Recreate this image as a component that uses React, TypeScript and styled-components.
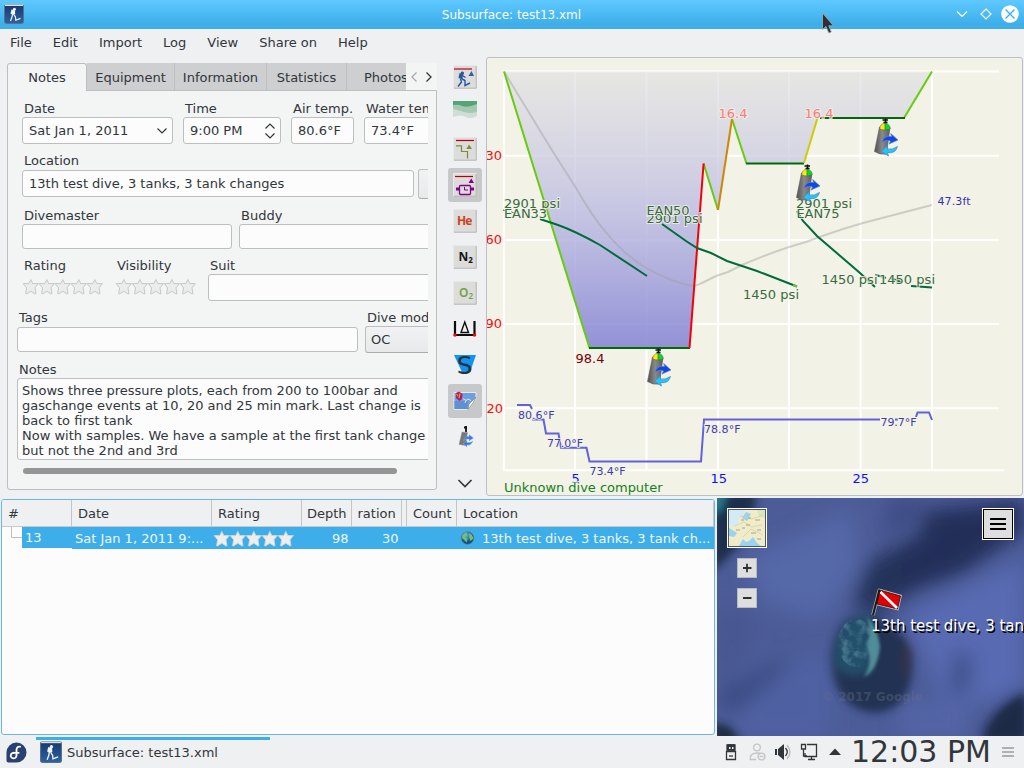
import React from "react";
import styled, { createGlobalStyle } from "styled-components";

const Global = createGlobalStyle`
  * { box-sizing: border-box; }
  html, body { margin: 0; padding: 0; overflow: hidden; }
  body { font-family: "DejaVu Sans", sans-serif; font-size: 13px; line-height: 15px; color: #31363b; }
  svg { display: block; flex: none; }
`;

const Window = styled.div`
  width: 1024px; height: 768px; display: flex; flex-direction: column;
  background: #eff0f1; overflow: hidden; white-space: nowrap;
`;
const TitleBar = styled.header`
  height: 29px; flex: none; display: grid; grid-template-columns: 80px 1fr 80px; align-items: center;
  padding: 0 5px 1px 4px; color: #fcfcfc; background: linear-gradient(#5fc9ff, #3daee9 85%);
`;
const Title = styled.div` text-align: center; font-size: 12px; padding-top: 2px; `;
const TitleButtons = styled.div` display: flex; justify-content: flex-end; `;
const MenuBar = styled.nav`
  height: 28px; flex: none; display: flex; align-items: center; padding: 0 0 1px 10px; gap: 21px;
`;
const Main = styled.main` height: 441px; flex: none; display: flex; `;

const InfoPanel = styled.section` width: 444px; padding: 6px 7px 8px 7px; display: flex; flex-direction: column; `;
const TabBar = styled.div` height: 28px; display: flex; position: relative; z-index: 1; `;
const Tab = styled.div<{ $w: number; $active?: boolean }>`
  width: ${p => p.$w}px; height: ${p => (p.$active ? 28 : 27)}px; line-height: ${p => (p.$active ? 27 : 29)}px; text-align: center; overflow: hidden; flex: none;
  background: ${p => (p.$active ? "#f3f4f4" : "#cecfd0")};
  border: solid #bcbebf; border-width: ${p => (p.$active ? "1px 1px 0 1px" : "0 1px 0 0")};
  border-radius: ${p => (p.$active ? "3px 3px 0 0" : "0")};
`;
const LastTab = styled(Tab)` text-align: left; padding-left: 17px; border-right: 0; `;
const TabScroll = styled.div` width: 31px; height: 27px; display: flex; align-items: center; background: #f3f4f4; `;
const Pane = styled.div`
  height: 400px; margin-top: -1px; border: 1px solid #bcbebf; border-radius: 0 0 3px 3px; background: #f3f4f4;
  padding: 10px 8px 0 0; 
`;
const PaneClip = styled.div` height: 386px; overflow: hidden; width: 420px; `;
const FormRow = styled.div<{ $h: number; $left?: number; $gap: number }>`
  display: flex; height: ${p => p.$h}px; padding-left: ${p => p.$left ?? 14}px; gap: ${p => p.$gap}px;
`;
const Field = styled.div<{ $w: number }>` width: ${p => p.$w}px; flex: none; `;
const Label = styled.div<{ $gap?: number }>` padding-left: 2px; margin-bottom: ${p => p.$gap ?? 1}px; height: 15px; `;
const Input = styled.div<{ $h?: number }>`
  height: ${p => p.$h ?? 27}px; border: 1px solid #bcbebf; border-radius: 3px; background: #fcfcfc;
  padding: 0 4px 0 6px; display: flex; align-items: center; justify-content: space-between;
`;
const Button = styled(Input)` background: linear-gradient(#f1f2f3, #e8e9ea); border-bottom-color: #a9abac; padding-left: 5px; `;
const PickerButton = styled(Button)` width: 30px; height: 30px; flex: none; margin-top: 16px; `;
const NotesBox = styled.div`
  width: 430px; height: 82px; border: 1px solid #bcbebf; border-radius: 3px; background: #fcfcfc; padding: 4px; white-space: pre; overflow: hidden;
`;
const ScrollThumb = styled.div` width: 374px; height: 6px; border-radius: 3px; margin: 7px 0 0 15px; background: #929697; `;

const ToolBar = styled.aside` width: 42px; display: flex; flex-direction: column; padding: 3px 4px; gap: 2px; `;
const Tool = styled.div<{ $on?: boolean }>`
  width: 34px; height: 34px; flex: none; display: flex; align-items: center; justify-content: center;
  border-radius: 3px; background: ${p => (p.$on ? "#c6c8ca" : "transparent")};
`;
const Profile = styled.section`
  width: 537px; height: 439px; border: 1px solid #bcc0c4; border-radius: 3px; background: #f3f2e6; overflow: hidden;
`;

const Bottom = styled.section` height: 238px; flex: none; display: flex; padding-left: 1px; `;
const DiveList = styled.div`
  width: 714px; height: 236px; margin-top: 1px; border: 1px solid #6db6de; border-radius: 3px; background: #fcfcfc; overflow: hidden;
`;
const HeaderRow = styled.div` display: flex; height: 27px; background: #eff0f1; border-bottom: 1px solid #c8cacc; `;
const HeadCell = styled.div<{ $w: number; $pad?: number }>`
  width: ${p => p.$w}px; flex: none; border-right: 1px solid #c3c5c7; line-height: 27px; padding-left: ${p => p.$pad ?? 6}px; overflow: hidden;
`;
const DiveRow = styled.div` display: flex; height: 22px; color: #eff7fc; `;
const Branch = styled.div` width: 20px; height: 22px; flex: none; `;
const Cell = styled.div<{ $w: number; $right?: boolean; $h?: number; $pad?: number }>`
  width: ${p => p.$w}px; height: ${p => p.$h ?? 22}px; flex: none; background: #3daee9; line-height: 23px;
  padding-left: ${p => (p.$right ? 0 : p.$pad ?? 3)}px; padding-right: ${p => (p.$right ? 3.5 : 0)}px;
  text-align: ${p => (p.$right ? "right" : "left")}; display: ${p => (p.$right ? "block" : "flex")}; align-items: center;
`;
const MapPane = styled.div` width: 307px; height: 238px; margin-left: 2px; overflow: hidden; `;

const TaskBar = styled.footer`
  height: 32px; flex: none; display: flex; align-items: center; background: #eff0f1; padding-left: 6px;
`;
const TaskItem = styled.div`
  width: 235px; height: 32px; margin-left: 9px; display: flex; align-items: center; gap: 5px; padding: 0 0 0 4px;
  background: linear-gradient(#3daee9, #3daee9) 0 1px / 234px 3px no-repeat;
`;
const Tray = styled.div` margin-left: auto; display: flex; align-items: center; height: 32px; `;
const Clock = styled.div` width: 150px; font-size: 30px; line-height: 32px; padding-left: 9px; `;
const Pointer = styled.svg` position: absolute; left: 821px; top: 12px; `;

const starPath = "M8 .6 L10 4.6 H15.6 L12.2 8.8 L13.2 14.8 H12 L8 12.2 L4 14.8 H2.800 L3.8 8.8 L.4 4.6 H6Z";
const Stars = ({ fill, stroke }: { fill: string; stroke: string }) => (
  <svg width="81" height="17" viewBox="0 0 81 17">
    {[0, 1, 2, 3, 4].map(i => (
      <path key={i} d={starPath} transform={`translate(${i * 16 + 0.8} 1)`} fill={fill} stroke={stroke} strokeWidth="1" />
    ))}
  </svg>
);

const AppIcon = ({ size }: { size: number }) => (
  <svg width={size} height={size} viewBox="0 0 20 20">
    <defs>
      <linearGradient id="appIcon" x2="0" y2="1"><stop stopColor="#17386e" /><stop offset="1" stopColor="#2d62a6" /></linearGradient>
    </defs>
    <rect x=".5" y=".5" width="19" height="19" rx="2" fill="url(#appIcon)" stroke="#5a7184" />
    <path d="M1 1.2H19" stroke="#d9dfdc" strokeWidth="1.6" />
    <circle cx="10.4" cy="5.2" r="1.500" fill="#f4f4ee" />
    <path d="M7.500 5.500L11 6.500L11.200 10L9 11L6.500 9.500Z" fill="#f4f4ee" />
    <path d="M8.500 10L8 13L6.500 17M9.800 10.500L11.400 12.800L11.800 16.200L16.500 14.400" fill="none" stroke="#f4f4ee" strokeWidth="1.200" />
  </svg>
);

const Tile = () => (
  <>
    <rect x=".5" y=".5" width="23" height="23" fill="#dcdcdb" />
    <path d="M.5 23.5V.5H23.5" fill="none" stroke="#e9e9e8" />
    <path d="M23.2 1V23.2H1" fill="none" stroke="#b5b5b4" />
  </>
);
const Ico = ({ children }: { children: React.ReactNode }) => (
  <svg width="24" height="24" viewBox="0 0 24 24">{children}</svg>
);

const Cylinder = ({ x, y }: { x: number; y: number }) => (
  <g transform={`translate(${x} ${y})`}>
    <path d="M8 1.500H13.500M11 0V6M9 4H13" stroke="#111" strokeWidth="1.700" />
    <path d="M5 8.500L15.500 9L12 35.500Q5 36.500 0 33Z" fill="url(#tankBody)" stroke="#5c5c5c" strokeWidth=".6" />
    <path d="M5.300 10.500A5.200 5.200 0 0 1 10.600 4.800V11.400Q7.500 11.500 5.300 10.500Z" fill="#f6f000" stroke="#555" strokeWidth=".5" />
    <path d="M10.600 4.800A5.200 5.200 0 0 1 15.700 10.300Q14 11.500 10.600 11.400Z" fill="#00e01a" stroke="#555" strokeWidth=".5" />
    <path d="M7.500 24Q9.500 16.500 17 18L16.200 15L23.500 21.500L14.500 25.500L16 22.500Q11.500 20.500 7.500 24Z" fill="#1048e6" stroke="#5a86c4" strokeWidth=".7" />
    <path d="M23 28Q21 35.500 13 34L14 37.500L6.800 32.800L13 27L12.500 30.500Q18 31.500 23 28Z" fill="#1cc8f8" stroke="#4a7ec0" strokeWidth=".7" />
  </g>
);

const tools: { on?: boolean; icon: React.ReactNode }[] = [
  { icon: <Ico><Tile /><path d="M1 4H19" stroke="#b80012" strokeWidth="1.200" /><path d="M15.500 11L18.500 6L21 11Z" fill="#2c5fa3" /><circle cx="9.300" cy="8.300" r="1.700" fill="#2458a0" /><path d="M6.500 8L10 9.500L9.500 14.500L5.500 13Z" fill="#2458a0" /><path d="M9.500 10.500L12.500 12.500M7.500 14L8.500 17L5 21.500M9 14L12 15.500V20.500L17 18" fill="none" stroke="#2458a0" strokeWidth="1.400" /></Ico> },
  { icon: <svg width="24" height="24" viewBox="0 1 24 24"><rect width="24" height="18" fill="#d0ddd7" /><path d="M0 0H24V12Q18 14 11 12Q5 10 0 9Z" fill="#a3c9b0" /><path d="M0 0H24V4Q15 8 9 6Q5 4 0 5Z" fill="#58a277" /><path d="M0 17Q8 14 13 17Q18 20 24 16V19H0Z" fill="#eff0f1" /></svg> },
  { icon: <Ico><Tile /><path d="M3 3.500H21" stroke="#b80012" strokeWidth="1.200" /><path d="M3 8.800H8.500V14.500H14.500V21.500" fill="none" stroke="#7e8a3c" strokeWidth="1.200" /><path d="M13.500 12L16 7.500L19 12Z" fill="#7e8a3c" /></Ico> },
  { on: true, icon: <Ico><Tile /><path d="M2 3.500H20" stroke="#b80012" strokeWidth="1.200" /><path d="M15.500 10L18.300 5.500L21 10Z" fill="#850085" /><rect x="6.500" y="12.500" width="11" height="9" rx="1" fill="none" stroke="#850085" strokeWidth="1.300" /><path d="M3 14.500H6V17.500H3ZM18 14.500H21V17.500H18Z" fill="#850085" /><path d="M11.500 14V17H15" fill="none" stroke="#850085" /></Ico> },
  { icon: <Ico><Tile /><text x="4" y="16" fontSize="12" fontWeight="700" textLength="15.500" fontFamily="Noto Sans" fill="#d04020">He</text></Ico> },
  { icon: <Ico><Tile /><text x="5.500" y="16" fontSize="12" fontWeight="700" fontFamily="Noto Sans" fill="#151515">N<tspan fontSize="8" dy="2">2</tspan></text></Ico> },
  { icon: <Ico><Tile /><text x="6" y="16" fontSize="12" fontWeight="600" fontFamily="Noto Sans" fill="#71a144">O<tspan fontSize="8" dy="2">2</tspan></text></Ico> },
  { icon: <Ico><path d="M2 4V18H21.500V4" fill="none" stroke="#0c0c0c" strokeWidth="2.200" /><path d="M8 15.500L11.800 5L15.500 15.500Z" fill="none" stroke="#0c0c0c" strokeWidth="1.400" /><circle cx="2" cy="18" r="1.700" fill="red" /><circle cx="21.500" cy="18" r="1.700" fill="red" /></Ico> },
  { icon: <Ico><path d="M1 2H23L17 19H9Z" fill="#1093f5" /><text x="3.800" y="20.500" fontSize="25" fontFamily="DejaVu Sans" fill="#2b3036">S</text></Ico> },
  { on: true, icon: <Ico><path d="M1 3.500H23V10L15 20.500H1Z" fill="#6fa0dc" stroke="#e6ebef" /><path d="M1.500 12H15L14 20H1.500Z" fill="#5e90d2" /><path d="M3 4L6 2.500L9.500 5L9 10L6.500 12L3 9Z" fill="#b51c69" /><path d="M3.500 5L5 7M7 4.500L6 9" stroke="#e6a13a" strokeWidth="1.200" /><path d="M10 9.500L13 11.500L15 10L18 11.500M13 11.500L12 14" stroke="#d8e5ed" strokeWidth="1" fill="none" /><path d="M23 8L20 14L15 20.500L16 15Z" fill="#f4f4f0" stroke="#777" strokeWidth=".6" /></Ico> },
  { icon: <Ico><path d="M11 2.500H14M13 1V7" stroke="#111" strokeWidth="1.800" /><path d="M9 7L14.500 7.500L12.500 20.500L6 19.500Z" fill="#777" stroke="#999" strokeWidth=".5" /><path d="M10.500 15.500Q12 10.500 16 11.500V9.500L20.500 13L16 16V14Q13 13.500 10.500 15.500ZM20 16Q18 21 14 20V22L10 18.500L14 15.500V17.500Q17 18 20 16Z" fill="#3e7bd5" stroke="#a6c5ee" strokeWidth=".4" /></Ico> },
];

const HaloText = ({ x, y, w, c, s = 13, children }: { x: number; y: number; w: number; c: string; s?: number; children: string }) => (
  <text x={x} y={y} textLength={w} fontSize={s} fill={c} stroke="#f3f2e6" strokeWidth="2" strokeOpacity=".8" paintOrder="stroke">{children}</text>
);

const shape = "504,71.500 589.500,348 689.500,348 703.600,163.500 718,210 732,119 746.500,163.500 803.500,163.500 817.500,118 904,118 932,71.500";

const ProfileChart = () => (
  <svg width="535" height="437" viewBox="487 58 535 437" fontFamily="DejaVu Sans">
    <defs>
      <linearGradient id="depthFill" gradientUnits="userSpaceOnUse" x1="0" y1="71" x2="0" y2="348">
        <stop stopColor="#dfdfe2" stopOpacity=".6" /><stop offset=".5" stopColor="#bcbbe2" stopOpacity=".8" /><stop offset="1" stopColor="#8584d5" stopOpacity=".88" />
      </linearGradient>
      <linearGradient id="tankBody"><stop stopColor="#505050" /><stop offset=".5" stopColor="#8a8a8a" /><stop offset="1" stopColor="#5c5c5c" /></linearGradient>
    </defs>
    <g stroke="#fff" strokeWidth="2" fill="none">
      <path d="M503.800 71.500V471M575 71.500V471M646.500 71.500V471M718 71.500V471M789 71.500V471M860.500 71.500V471M932 71.500V471" />
      <path d="M503 71.500H999M503 155.800H999M503 240H999M503 324H999M503 408.200H999M503 470.200H1004" />
    </g>
    <polygon points={shape} fill="url(#depthFill)" />
    <path d="M504 71.500L550 147L576 188Q594 219 605 231Q625 256 648 269Q670 281 688 285Q695 287 702 283L716 276L728 272L742 265Q765 255 789 247L806 242Q832 232 863 223L932 205" fill="none" stroke="#a0a0a0" strokeOpacity=".45" strokeWidth="2" />
    <g fill="none" strokeWidth="2">
      <path d="M504 71.500L589.500 348M703.600 163.500L718 210M732 119L746.500 163.500M904 118L932 71.500" stroke="#66cc10" />
      <path d="M589 348H690M746 163.500H804M820 118H905" stroke="#006a08" />
      <path d="M689.500 348L703.600 163.500" stroke="#f60008" />
      <path d="M718 210L732 119" stroke="#cc8808" />
      <path d="M804 163L817.500 118" stroke="#cccc08" />
      <g stroke="#006b3c">
        <path d="M540 219L558 225Q575 231 600 245L647 276" />
        <path d="M503 210L506 211M511 212L515 213" strokeWidth="1" />
        <path d="M662 224L686 241L697 248L711 253L727 261L745 267L757 271L797 286.500" />
        <path d="M797 211L803 221L817 236L860 273L875 287" />
        <path d="M876 275L886 278M890 278L901 282M911 286L932 287.500" />
      </g>
      <path d="M793 285L797 286.500" stroke="#66cc30" />
      <path d="M517 405H530L532 409M532 419.500H543.500L546 433.500H558.500L561 447.800H586.500L589.500 461.500H701L704 419.500H880M895 419.500H898M916 417L917.500 412.500H929L932 420" stroke="#6262dc" strokeWidth="2" />
    </g>
    <HaloText x={718.500} y={118} w={29} c="#ff7777">16.4</HaloText>
    <HaloText x={804.500} y={118} w={29} c="#ff7777">16.4</HaloText>
    <HaloText x={504} y={208} w={56} c="#376b41">2901 psi</HaloText>
    <HaloText x={504} y={218} w={43} c="#376b41">EAN33</HaloText>
    <HaloText x={646.500} y={223} w={56} c="#376b41">2901 psi</HaloText>
    <HaloText x={646.500} y={214.500} w={43} c="#376b41">EAN50</HaloText>
    <Cylinder x={874.500} y={118.500} />
    <HaloText x={796} y={208} w={56} c="#376b41">2901 psi</HaloText>
    <Cylinder x={796.500} y={164.500} />
    <Cylinder x={647.500} y={348.500} />
    <HaloText x={796.500} y={218} w={43} c="#376b41">EAN75</HaloText>
    <HaloText x={743} y={299} w={56} c="#376b41">1450 psi</HaloText>
    <HaloText x={821.500} y={284} w={56} c="#376b41">1450 psi</HaloText>
    <HaloText x={879} y={284} w={56} c="#376b41">1450 psi</HaloText>
    <HaloText x={937.500} y={205} w={33} c="#3430b8" s={11}>47.3ft</HaloText>
    <HaloText x={575.500} y={363} w={29} c="#780008">98.4</HaloText>
    <HaloText x={518} y={418.500} w={36.500} c="#3c3cb0" s={11}>80.6°F</HaloText>
    <HaloText x={547} y={446.500} w={36} c="#3c3cb0" s={11}>77.0°F</HaloText>
    <HaloText x={589.500} y={474.500} w={36} c="#3c3cb0" s={11}>73.4°F</HaloText>
    <HaloText x={704} y={432.500} w={36.500} c="#3c3cb0" s={11}>78.8°F</HaloText>
    <HaloText x={880.500} y={425.500} w={36} c="#3c3cb0" s={11}>79.7°F</HaloText>
    <g fontSize="13" fill="#f40c10">
      <text x="485.500" y="160">30</text><text x="485.500" y="244">60</text><text x="485.500" y="328">90</text><text x="486.500" y="412.500">20</text>
    </g>
    <g fontSize="13" fill="#1010ff">
      <text x="571.500" y="483">5</text><text x="710.500" y="483">15</text><text x="852.500" y="483">25</text>
    </g>
    <HaloText x={504} y={492} w={158.500} c="#158020">Unknown dive computer</HaloText>
  </svg>
);

const SatelliteMap = () => (
  <svg width="307" height="238" viewBox="717 498 307 238" fontFamily="DejaVu Sans">
    <defs>
      <filter id="soft" x="-50%" y="-50%" width="200%" height="200%"><feGaussianBlur stdDeviation="10" /></filter>
      <filter id="mid" x="-50%" y="-50%" width="200%" height="200%"><feGaussianBlur stdDeviation="4" /></filter>
      <filter id="fine" x="-20%" y="-20%" width="140%" height="140%"><feGaussianBlur stdDeviation="1.400" /></filter>
      <filter id="reefNoise"><feTurbulence type="fractalNoise" baseFrequency=".12" numOctaves="3" seed="4" /><feColorMatrix values="0 0 0 0 .25  0 0 0 0 .52  0 0 0 0 .6  1.500 0 0 0 -.6" /><feComposite in2="SourceGraphic" operator="in" /><feGaussianBlur stdDeviation=".6" /></filter>
    </defs>
    <rect x="717" y="498" width="307" height="238" fill="#4c5c98" />
    <g filter="url(#soft)">
      <path d="M745 560L850 510L860 570L820 620L760 600Z" fill="#5468a8" />
      <path d="M905 615L1024 560V690L950 710Z" fill="#586bb2" />
      <path d="M740 680L830 650L830 740H740Z" fill="#5061a2" />
      <path d="M900 700L970 700V740H900Z" fill="#5363a5" />
      <path d="M925 510L1024 500V530L965 572L915 590L880 612L852 602L872 560L920 535Z" fill="#212e58" />
      <path d="M862 570L905 552L900 600L862 620Z" fill="#233058" />
      <path d="M955 650L972 655L968 695L950 695Z" fill="#3c4b85" />
      <path d="M717 600L760 625L735 670L717 690Z" fill="#465690" />
      <path d="M717 695L790 655L780 675L730 715Z" fill="#384980" />
      <path d="M890 498H930L910 525L880 540Z" fill="#3d4c84" />
      <path d="M990 725L1024 690V740H980Z" fill="#1b2749" />
    </g>
    <g filter="url(#mid)">
      <path d="M713 493H756Q755 530 735 550L713 572Z" fill="#1f2d4b" />
      <path d="M713 493H727L720 512H713Z" fill="#277f92" />
      <path d="M831 655Q836 612 868 614Q914 632 913 662Q912 712 873 713Q832 708 831 655Z" fill="#223152" />
      <path d="M836 645Q845 612 870 615L870 672Q845 680 835 665Z" fill="#22506a" />
      <ellipse cx="906" cy="660" rx="5" ry="18" fill="#33334a" />
      <path d="M982 740Q997 705 1026 693V740Z" fill="#1e2947" />
      <path d="M713 722L730 727L742 742H713Z" fill="#1b2c3f" />
    </g>
    <ellipse cx="856" cy="643" rx="18" ry="24" filter="url(#reefNoise)" opacity=".6" />
    <g filter="url(#fine)">
      <path d="M867 617Q877 626 880 646Q878 670 864 677Q873 663 867 647Q872 630 867 617Z" fill="#4f8d98" />
    </g>
    <text x="822" y="701" fontSize="12" fontWeight="700" textLength="101" fill="#667080" fillOpacity=".4">© 2017 Google</text>
    <rect x="727.500" y="508.500" width="39" height="39" fill="#f0ebc9" stroke="#fff" />
    <rect x="728.500" y="509.500" width="37" height="37" fill="none" stroke="#4e5666" />
    <path d="M729 510H745L743 516L739 518L738 524L734 527L729 524Z" fill="#d3ebf4" />
    <path d="M746 512L751 514L747 521L742 518ZM729 528L737 533L734 537L729 536ZM739 546L743 539L746 542L749 541L753 537L757 543L761 546Z" fill="#98d3f0" />
    <path d="M757 510H765V518L759 517Z" fill="#d8e7b9" />
    <path d="M735 526L744 522L752 527L762 525M740 516L752 519L763 515M743 537L751 529L763 535" stroke="#d9cfa2" strokeWidth=".8" fill="none" />
    <path d="M736 530H740M746 525H750M755 520H760M751 533H756M742 528H745M757 530H761M748 518H751M741 520H744M757 539H761" stroke="#8a8878" strokeWidth=".7" />
    <g fill="#dededf" stroke="#b8babd"><rect x="737.500" y="558.500" width="19" height="19" /><rect x="737.500" y="588.500" width="19" height="19" /></g>
    <path d="M743 568H751.500M747 563.800V572.200M743 598H751.500" stroke="#2d3135" strokeWidth="1.800" />
    <rect x="982.500" y="508.500" width="31" height="31" fill="#dededf" stroke="#fff" />
    <rect x="983.500" y="509.500" width="29" height="29" fill="none" stroke="#000" />
    <path d="M990 519H1006M990 524H1006M990 529H1006" stroke="#000" strokeWidth="2" />
    <path d="M879.500 590L900.500 596L897.500 609L877 604Z" fill="#e30000" stroke="#c8c8cc" strokeWidth="2.500" />
    <path d="M879.500 589.500L873 615" stroke="#aaa" strokeWidth="3.500" />
    <path d="M879.500 590L900.500 596L897.500 609L877 604Z" fill="#e30000" stroke="#231010" strokeWidth=".8" />
    <path d="M880.500 592L897 608" stroke="#fff" strokeWidth="2.600" />
    <path d="M879.500 589.500L873 615" stroke="#171717" strokeWidth="2" />
    <text x="872.500" y="632.500" fontSize="15" fill="#000">13th test dive, 3 tanks, 3 tank changes</text>
    <text x="871" y="631" fontSize="15" fill="#fff">13th test dive, 3 tanks, 3 tank changes</text>
  </svg>
);

export default function App() {
  return (
    <Window>
      <Global />
      <TitleBar>
        <AppIcon size={20} />
        <Title>Subsurface: test13.xml</Title>
        <TitleButtons>
          <svg width="68" height="20" viewBox="951 4 68 20">
            <path d="M957 11.500L962 16.500L967 11.500M986 9L991 14L986 19L981 14Z" fill="none" stroke="#fcfcfc" strokeWidth="1.200" />
            <circle cx="1010" cy="14" r="8.800" fill="#fcfcfc" />
            <path d="M1005.500 9.500L1014.500 18.500M1014.500 9.500L1005.500 18.500" stroke="#3daee9" strokeWidth="1.300" />
          </svg>
        </TitleButtons>
      </TitleBar>
      <MenuBar>
        {["File", "Edit", "Import", "Log", "View", "Share on", "Help"].map(m => <span key={m}>{m}</span>)}
      </MenuBar>
      <Main>
        <InfoPanel>
          <TabBar>
            <Tab $w={80} $active>Notes</Tab>
            <Tab $w={88}>Equipment</Tab>
            <Tab $w={92}>Information</Tab>
            <Tab $w={80}>Statistics</Tab>
            <LastTab $w={59}>Photos</LastTab>
            <TabScroll>
              <svg width="31" height="27" viewBox="406 63 31 27" fill="none" strokeWidth="1.300">
                <path d="M416.500 72.500L412 77L416.500 81.500" stroke="#a8abad" /><path d="M426.500 72.500L431 77L426.500 81.500" stroke="#31363b" />
              </svg>
            </TabScroll>
          </TabBar>
          <Pane>
            <PaneClip>
              <FormRow $h={52} $gap={10}>
                <Field $w={151}><Label>Date</Label><Input>Sat Jan 1, 2011
                  <svg width="12" height="12" viewBox="0 0 12 12"><path d="M1.500 3.500L6 8L10.500 3.500" fill="none" stroke="#31363b" strokeWidth="1.200" /></svg></Input></Field>
                <Field $w={98}><Label>Time</Label><Input>9:00 PM
                  <svg width="12" height="18" viewBox="0 0 12 18"><path d="M1.500 6.500L6 2L10.500 6.500M1.500 11.500L6 16L10.500 11.500" fill="none" stroke="#31363b" strokeWidth="1.200" /></svg></Input></Field>
                <Field $w={63}><Label>Air temp.</Label><Input>80.6°F</Input></Field>
                <Field $w={90}><Label>Water temp.</Label><Input>73.4°F</Input></Field>
              </FormRow>
              <FormRow $h={55} $gap={4}>
                <Field $w={392}><Label $gap={2}>Location</Label><Input>13th test dive, 3 tanks, 3 tank changes</Input></Field>
                <PickerButton />
              </FormRow>
              <FormRow $h={50} $gap={7}>
                <Field $w={210}><Label>Divemaster</Label><Input $h={25} /></Field>
                <Field $w={210}><Label>Buddy</Label><Input $h={25} /></Field>
              </FormRow>
              <FormRow $h={52} $gap={12}>
                <Field $w={81}><Label $gap={5}>Rating</Label><Stars fill="#ececec" stroke="#c6c7c8" /></Field>
                <Field $w={81}><Label $gap={5}>Visibility</Label><Stars fill="#ececec" stroke="#c6c7c8" /></Field>
                <Field $w={240}><Label>Suit</Label><Input /></Field>
              </FormRow>
              <FormRow $h={52} $left={9} $gap={7}>
                <Field $w={341}><Label $gap={2}>Tags</Label><Input $h={25} /></Field>
                <Field $w={90}><Label>Dive mode</Label><Button>OC</Button></Field>
              </FormRow>
              <FormRow $h={99} $left={9} $gap={0}>
                <Field $w={430}>
                  <Label>Notes</Label>
                  <NotesBox>{"Shows three pressure plots, each from 200 to 100bar and\ngaschange events at 10, 20 and 25 min mark. Last change is\nback to first tank\nNow with samples. We have a sample at the first tank change\nbut not the 2nd and 3rd"}</NotesBox>
                </Field>
              </FormRow>
              <ScrollThumb />
            </PaneClip>
          </Pane>
        </InfoPanel>
        <ToolBar>
          {tools.map((t, i) => <Tool key={i} $on={t.on}>{t.icon}</Tool>)}
          <Tool><svg width="24" height="24" viewBox="0 0 24 24" overflow="visible"><path d="M5.500 19L12 25.500L18.500 19" fill="none" stroke="#31363b" strokeWidth="1.600" /></svg></Tool>
        </ToolBar>
        <Profile><ProfileChart /></Profile>
      </Main>
      <Bottom>
        <DiveList>
          <HeaderRow>
            <HeadCell $w={70}>#</HeadCell><HeadCell $w={140}>Date</HeadCell><HeadCell $w={90}>Rating</HeadCell>
            <HeadCell $w={50} $pad={5}>Depth</HeadCell><HeadCell $w={50} $pad={5.5}>ration</HeadCell><HeadCell $w={5} $pad={0} />
            <HeadCell $w={50}>Count</HeadCell><HeadCell $w={257}>Location</HeadCell>
          </HeaderRow>
          <DiveRow>
            <Branch><svg width="20" height="22" viewBox="0 0 20 22"><path d="M9.500 0V10.500H20" fill="none" stroke="#bcbebf" /></svg></Branch>
            <Cell $w={50} $h={21}>13</Cell>
            <Cell $w={140}>Sat Jan 1, 2011 9:...</Cell>
            <Cell $w={90} $pad={1}><Stars fill="#eeeeee" stroke="#cfd3d5" /></Cell>
            <Cell $w={50} $right>98</Cell><Cell $w={50} $right>30</Cell><Cell $w={55} />
            <Cell $w={257} $pad={3}>
              <svg width="22" height="16" viewBox="0 0 22 16"><defs><radialGradient id="globe" cx=".4" cy=".3"><stop stopColor="#66b2d4" /><stop offset="1" stopColor="#145482" /></radialGradient></defs><circle cx="7.500" cy="8" r="6.500" fill="url(#globe)" stroke="#5a91b1" strokeWidth=".7" /><path d="M2.500 5L6.500 2L7 4.500L5 7L7.500 9L6.500 12.500L4 9.500L2 8ZM9 3L12 5L13.500 8.500L10.500 11L9.500 8Z" fill="#78c06e" /></svg>
              13th test dive, 3 tanks, 3 tank ch...
            </Cell>
          </DiveRow>
        </DiveList>
        <MapPane><SatelliteMap /></MapPane>
      </Bottom>
      <TaskBar>
        <svg width="21" height="21" viewBox="0 0 22 22"><path d="M11 .5A10.500 10.500 0 1 1 11 21.500H2.500Q.5 21.500 .5 19.500V11A10.500 10.500 0 0 1 11 .5Z" fill="#294172" /><path d="M15.500 5.200Q11.500 4 11 8V14Q10.500 17.800 7 17Q3.800 15.500 5.500 12.500Q6.800 11 9 11.300H14" fill="none" stroke="#fff" strokeWidth="1.900" /></svg>
        <TaskItem><AppIcon size={22} />Subsurface: test13.xml</TaskItem>
        <Tray>
          <svg width="117" height="32" viewBox="725 736 117 32" fill="none" stroke="#31363b" strokeWidth="1.300">
            <path d="M728 745H734V751H728ZM726.500 751.500H735.500V759.500H726.500Z" /><path d="M727 745H735V750H727Z" fill="#31363b" /><path d="M729 748H730.500M732 748H733.500" stroke="#eee" strokeWidth="2" /><path d="M729 756H733" />
            <g stroke="#c3c5c7"><circle cx="757" cy="747.500" r="3.300" /><path d="M750 759.500Q750 753 757 753Q760 753 761 754M750 759.500H756" /><circle cx="761.500" cy="756.500" r="3.400" /><path d="M759.500 756.500H763.500" /></g>
            <path d="M775 749H777V755H775ZM778 749L784 744V760L778 755Z" fill="#31363b" stroke="none" />
            <path d="M785.500 748Q789 752 785.500 756" /><path d="M787 745Q793 752 787 759" stroke="#b9bcbe" />
            <path d="M807 744.500H816.500V756.500H805V753M808 759.500H815M811.500 757V759" /><path d="M801.500 744.500H805.500V749H801.500ZM803.500 749V756H807" />
            <path d="M829 755L835 748.500L841 755Z" fill="#31363b" stroke="none" />
          </svg>
          <Clock>12:03 PM</Clock>
          <svg width="32" height="32" viewBox="992 736 32 32"><path d="M1002 748H1014M1002 752H1014M1002 756H1014" stroke="#999c9f" strokeWidth="1.300" /></svg>
        </Tray>
      </TaskBar>
      <Pointer width="14" height="23" viewBox="0 0 14 23"><path d="M1.500 1V17.500L5 14.500L7.800 21L10.300 20L7.800 13.800H12.500Z" fill="#2d3136" stroke="#9fb0ba" strokeWidth=".8" /></Pointer>
    </Window>
  );
}
